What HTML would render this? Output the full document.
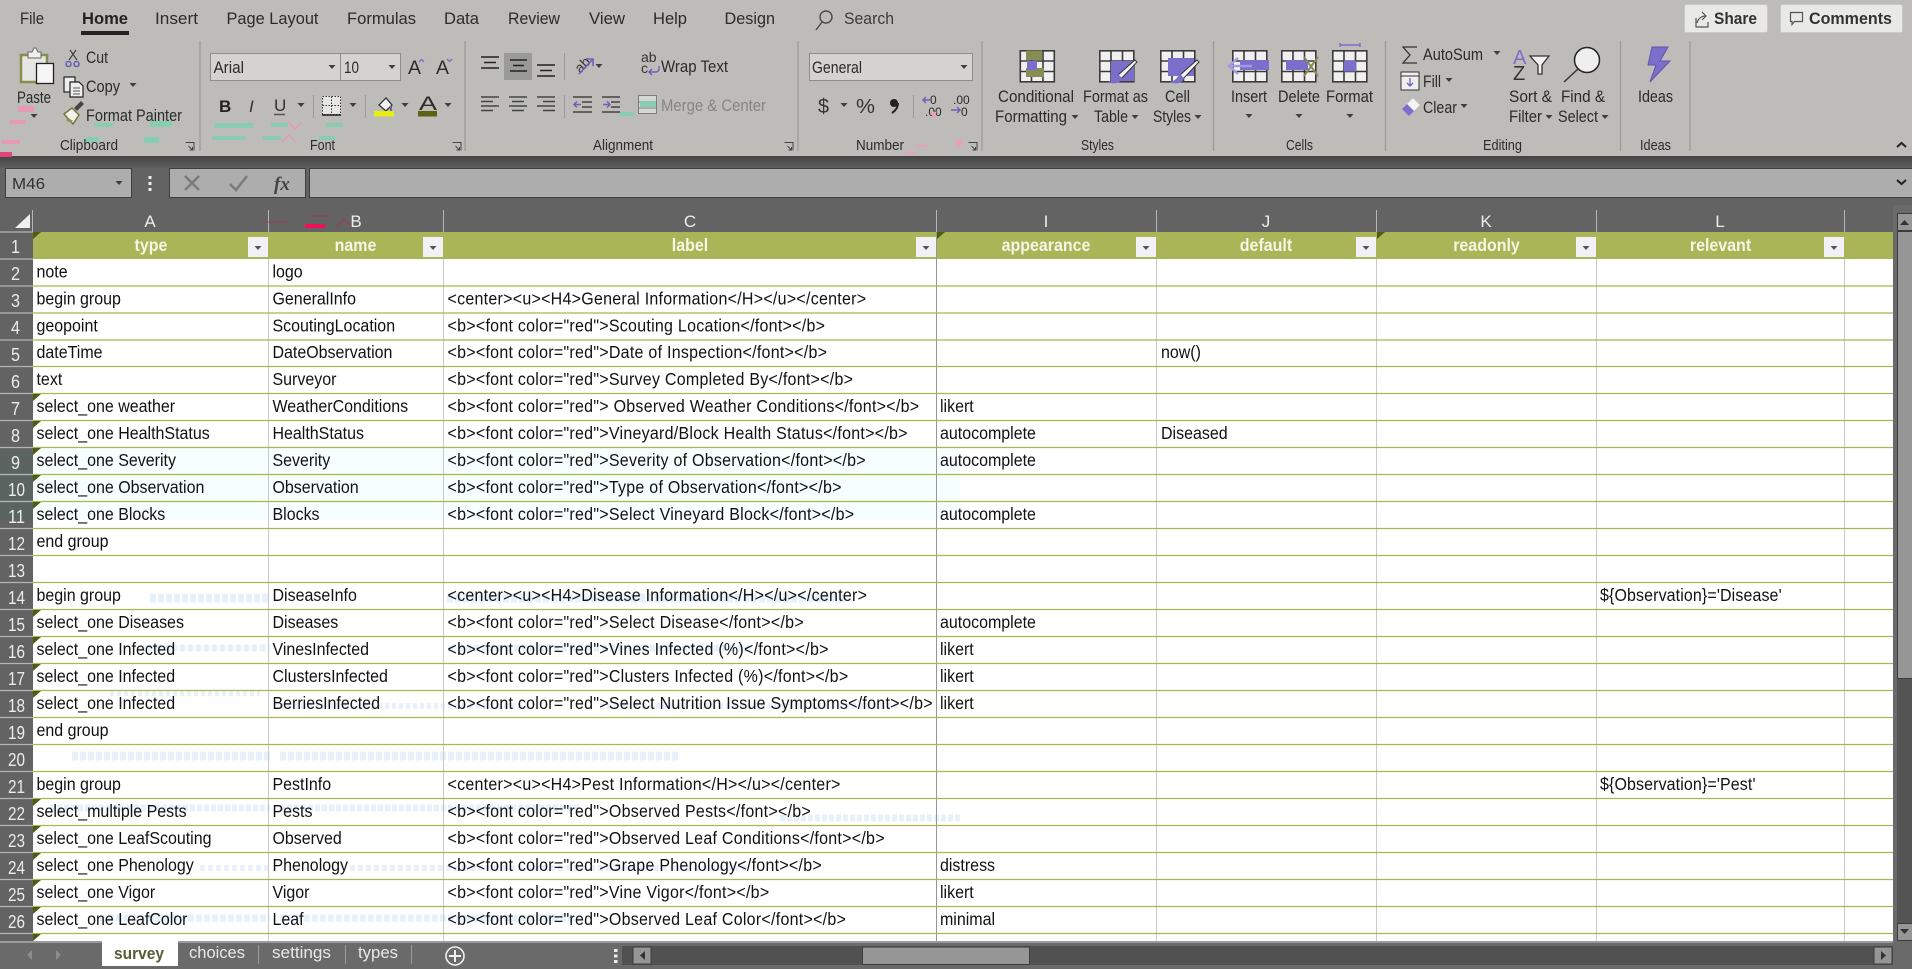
<!DOCTYPE html>
<html><head><meta charset="utf-8"><title>Excel</title>
<style>
html,body{margin:0;padding:0;width:1912px;height:969px;overflow:hidden;background:#636363}
svg{display:block;position:absolute;left:0;top:0}
text{font-family:"Liberation Sans",Arial,sans-serif;white-space:pre}
.r text{font-size:16.5px;fill:#2b2b2b}
.cl text{font-size:16px;fill:#111;transform-box:fill-box;transform-origin:0 81%;transform:translateY(-.8px) scaleY(1.07)}
.cl text[x="447.500"]{letter-spacing:.27px}
.cl text[x="1600"]{letter-spacing:.12px}
.hd text{font-size:16px;font-weight:bold;fill:#f4f6e6;text-anchor:middle;transform-box:fill-box;transform-origin:0 81%;transform:scaleY(1.07)}
.n text{font-size:18px;fill:#ececec}
.l text{font-size:17px;fill:#ececec;text-anchor:middle}
</style></head><body>
<svg width="1912" height="969" viewBox="0 0 1912 969" xmlns="http://www.w3.org/2000/svg">
<defs>
<path id="d" d="M-3.5-2h7l-3.5 4z" fill="#3e3e3e"/>
<g id="f"><rect width="20" height="20" fill="#f2f1f6"/><path d="M6.5 9h7l-3.5 4z" fill="#555"/></g>
<g id="tb" fill="none" stroke="#3a3a3a" stroke-width="1.6"><rect x=".8" y=".8" width="34" height="31" fill="#f0f0f0"/><path d="M.8 11h34M.8 21.5h34M12 .8v31M23.5 .8v31"/></g>
<path id="dl" d="M.5.5h8.500v8M3.500 4l4 4m0-3v3h-3" fill="none" stroke="#444" stroke-width="1"/>
</defs>

<!-- ribbon -->
<rect width="1912" height="157" fill="#bdbcb8"/>
<linearGradient id="gb" x1="0" y1="0" x2="0" y2="1"><stop offset="0" stop-color="#444"/><stop offset="1" stop-color="#5f5f5f"/></linearGradient>
<rect y="156" width="1912" height="12" fill="url(#gb)"/>
<rect y="168" width="1912" height="37" fill="#636363"/>

<g class="r">
<text x="20" y="24" textLength="24" lengthAdjust="spacingAndGlyphs">File</text>
<text x="82" y="24" textLength="46" lengthAdjust="spacingAndGlyphs" style="font-weight:bold;fill:#222">Home</text>
<text x="155" y="24" textLength="43" lengthAdjust="spacingAndGlyphs">Insert</text>
<text x="226.5" y="24" textLength="92" lengthAdjust="spacingAndGlyphs">Page Layout</text>
<text x="347" y="24" textLength="69" lengthAdjust="spacingAndGlyphs">Formulas</text>
<text x="444" y="24" textLength="35" lengthAdjust="spacingAndGlyphs">Data</text>
<text x="508" y="24" textLength="52" lengthAdjust="spacingAndGlyphs">Review</text>
<text x="589" y="24" textLength="36" lengthAdjust="spacingAndGlyphs">View</text>
<text x="653" y="24" textLength="34" lengthAdjust="spacingAndGlyphs">Help</text>
<text x="724.5" y="24" textLength="50.5" lengthAdjust="spacingAndGlyphs">Design</text>
<text x="844" y="24" textLength="50" lengthAdjust="spacingAndGlyphs" style="fill:#3c3c3c">Search</text>
<text x="60" y="150" textLength="58" lengthAdjust="spacingAndGlyphs" style="font-size:15px">Clipboard</text>
<text x="310" y="150" textLength="25" lengthAdjust="spacingAndGlyphs" style="font-size:15px">Font</text>
<text x="593" y="150" textLength="60" lengthAdjust="spacingAndGlyphs" style="font-size:15px">Alignment</text>
<text x="856" y="150" textLength="48" lengthAdjust="spacingAndGlyphs" style="font-size:15px">Number</text>
<text x="1081" y="150" textLength="33" lengthAdjust="spacingAndGlyphs" style="font-size:15px">Styles</text>
<text x="1286" y="150" textLength="27" lengthAdjust="spacingAndGlyphs" style="font-size:15px">Cells</text>
<text x="1483" y="150" textLength="39" lengthAdjust="spacingAndGlyphs" style="font-size:15px">Editing</text>
<text x="1640" y="150" textLength="31" lengthAdjust="spacingAndGlyphs" style="font-size:15px">Ideas</text>

<text x="17" y="103" textLength="34" lengthAdjust="spacingAndGlyphs">Paste</text>
<text x="86" y="63" textLength="22" lengthAdjust="spacingAndGlyphs">Cut</text>
<text x="86" y="92" textLength="34" lengthAdjust="spacingAndGlyphs">Copy</text>
<text x="86" y="121" textLength="96" lengthAdjust="spacingAndGlyphs">Format Painter</text>
<text x="661" y="72" textLength="67" lengthAdjust="spacingAndGlyphs">Wrap Text</text>
<text x="661" y="111" textLength="105" lengthAdjust="spacingAndGlyphs" style="fill:#858583">Merge &amp; Center</text>
<text x="998" y="102" textLength="76" lengthAdjust="spacingAndGlyphs">Conditional</text>
<text x="995" y="122" textLength="72" lengthAdjust="spacingAndGlyphs">Formatting</text>
<text x="1083" y="102" textLength="65" lengthAdjust="spacingAndGlyphs">Format as</text>
<text x="1094" y="122" textLength="34" lengthAdjust="spacingAndGlyphs">Table</text>
<text x="1165" y="102" textLength="25" lengthAdjust="spacingAndGlyphs">Cell</text>
<text x="1153" y="122" textLength="38" lengthAdjust="spacingAndGlyphs">Styles</text>
<text x="1231" y="102" textLength="36" lengthAdjust="spacingAndGlyphs">Insert</text>
<text x="1278" y="102" textLength="42" lengthAdjust="spacingAndGlyphs">Delete</text>
<text x="1326" y="102" textLength="47" lengthAdjust="spacingAndGlyphs">Format</text>
<text x="1423" y="60" textLength="60" lengthAdjust="spacingAndGlyphs">AutoSum</text>
<text x="1423" y="87" textLength="18" lengthAdjust="spacingAndGlyphs">Fill</text>
<text x="1423" y="113" textLength="34" lengthAdjust="spacingAndGlyphs">Clear</text>
<text x="1509" y="102" textLength="43" lengthAdjust="spacingAndGlyphs">Sort &amp;</text>
<text x="1509" y="122" textLength="33" lengthAdjust="spacingAndGlyphs">Filter</text>
<text x="1561" y="102" textLength="44" lengthAdjust="spacingAndGlyphs">Find &amp;</text>
<text x="1558" y="122" textLength="40" lengthAdjust="spacingAndGlyphs">Select</text>
<text x="1638" y="102" textLength="35" lengthAdjust="spacingAndGlyphs">Ideas</text>
</g>
<rect x="81" y="31" width="48" height="4" fill="#222"/>

<!-- search icon -->
<g fill="none" stroke="#4a4a4a" stroke-width="1.4"><circle cx="826" cy="17" r="6"/><path d="M822 22l-6 8"/></g>

<!-- share / comments -->
<rect x="1684.5" y="4.5" width="83" height="28" rx="2" fill="#e9e9e7" stroke="#c9c9c5"/>
<rect x="1780.5" y="4.5" width="122" height="28" rx="2" fill="#e9e9e7" stroke="#c9c9c5"/>
<g fill="none" stroke="#555" stroke-width="1.2"><path d="M1696 18v9h12v-5"/><path d="M1697 23c1-4 4-7 9-7M1702 12l4 4-4 4"/><path d="M1790.500 12.500h12v9h-8l-2.500 3v-3h-1.500z"/></g>
<g class="r"><text x="1714" y="24" textLength="43" lengthAdjust="spacingAndGlyphs" style="font-size:17px;font-weight:bold;fill:#333">Share</text>
<text x="1809" y="24" textLength="83" lengthAdjust="spacingAndGlyphs" style="font-size:17px;font-weight:bold;fill:#333">Comments</text></g>

<!-- group separators -->
<path d="M200 41v110M465 41v110M798 41v110M982 41v110M1213.5 41v110M1385.5 41v110M1620.5 41v110M1690 41v110" stroke="#9a9a97" stroke-width="1.2"/>
<use href="#dl" x="185" y="142"/><use href="#dl" x="452" y="142"/><use href="#dl" x="784" y="142"/><use href="#dl" x="968" y="142"/>

<!-- clipboard -->
<rect x="21" y="55" width="26" height="27" fill="#e6e6e2" stroke="#878d4c" stroke-width="2.5"/>
<path d="M28 58v-6h4l2-4h2l2 4h3v6z" fill="#efefec" stroke="#666" stroke-width="1"/>
<rect x="36.500" y="63.500" width="17" height="20" fill="#f6f6f6" stroke="#222" stroke-width="1.3"/>
<use href="#d" x="34" y="116"/>
<g fill="none" stroke="#3c3c3c" stroke-width="1.1"><path d="M69 60l7-10M77 60l-7-10"/></g>
<g fill="none" stroke="#6a62b8" stroke-width="1.6"><circle cx="68.500" cy="64" r="2.500"/><circle cx="76.500" cy="64" r="2.500"/></g>
<g stroke="#222" stroke-width="1.2" fill="#eee"><rect x="64" y="77" width="11" height="15"/><path d="M70 82h9l4 4v11H70z"/></g>
<path d="M73 88h7M73 91h7M73 94h7" stroke="#555"/>
<use href="#d" x="133" y="85"/>
<path d="M64 114l8-6 7 7-6 9z" fill="#f2f2ef" stroke="#75793f" stroke-width="1.5"/>
<path d="M74 108l7-7 3 3-7 7z" fill="#444"/>
<path d="M67 119l5 3" stroke="#8b914f" stroke-width="3"/>

<!-- font group -->
<rect x="210.500" y="53.500" width="130" height="27" fill="#d4d3d2" stroke="#8d8d8b"/>
<rect x="340.500" y="53.500" width="60" height="27" fill="#d4d3d2" stroke="#8d8d8b"/>
<g class="r"><text x="213.500" y="73" textLength="30.500" lengthAdjust="spacingAndGlyphs">Arial</text>
<text x="344" y="73" textLength="15" lengthAdjust="spacingAndGlyphs">10</text>
<text x="408" y="74" textLength="13" lengthAdjust="spacingAndGlyphs" style="font-size:19px">A</text>
<text x="436" y="74" textLength="13" lengthAdjust="spacingAndGlyphs" style="font-size:19px">A</text>
<text x="219" y="112" style="font-weight:bold;font-size:17px;fill:#222">B</text>
<text x="249" y="112" style="font-style:italic;font-size:17px;fill:#333">I</text>
<text x="274" y="111" style="font-size:17px;fill:#333">U</text>
<text x="419" y="110" textLength="18" lengthAdjust="spacingAndGlyphs" style="font-size:19px">A</text>
</g>
<use href="#d" x="332" y="67"/><use href="#d" x="392" y="67"/>
<path d="M419 62l2.500-2.500 2.500 2.500" fill="none" stroke="#7a70c8" stroke-width="1.4"/>
<path d="M447 59l2.500 2.500 2.500-2.500" fill="none" stroke="#7a70c8" stroke-width="1.4"/>
<path d="M274 114.500h11" stroke="#555" stroke-width="1.5"/>
<use href="#d" x="301" y="105"/>
<path d="M313.500 95v23M365.500 95v23" stroke="#9a9a97"/>
<rect x="322" y="96" width="19" height="19" fill="#e6e6e4"/>
<path d="M322.500 96.500h18v18h-18zM331.500 96.500v18M322.500 105.500h18" fill="none" stroke="#333" stroke-dasharray="1.500 1.500"/>
<path d="M322 115h19" stroke="#222" stroke-width="1.600"/>
<use href="#d" x="353" y="105"/>
<path d="M379 105l7-7 6 7-6 6z" fill="#f2f2f2" stroke="#333" stroke-width="1.300"/>
<path d="M391 106v5" stroke="#6a62b8" stroke-width="2"/>
<rect x="374" y="111" width="20" height="5.500" fill="#e6ee10"/>
<use href="#d" x="405" y="105"/>
<rect x="418" y="111" width="19" height="5.500" fill="#5b6310"/>
<use href="#d" x="448" y="105"/>

<!-- alignment -->
<rect x="504" y="53" width="28" height="27" fill="#9a9a98"/>
<path d="M481 57h18M484 62.500h12M481 68h18M510 60h17M513 65.500h11M510 71h17M537 65h18M540 70.500h12M537 76h18" stroke="#222" stroke-width="1.500"/>
<path d="M481 97h18M481 101.500h12M481 106h18M481 110.500h12M509 97h18M512 101.500h12M509 106h18M512 110.500h12M537 97h18M543 101.500h12M537 106h18M543 110.500h12" stroke="#444" stroke-width="1.500"/>
<path d="M564.500 53v27M564.500 95v23" stroke="#9a9a97"/>
<text x="573" y="70" transform="rotate(-45 581 63)" style="font-size:14px;fill:#333">ab</text>
<path d="M579 74l13-14M586 59h7v7" fill="none" stroke="#6a62b8" stroke-width="1.600"/>
<use href="#d" x="599" y="66"/>
<path d="M573 97h19M582 102h10M582 107h10M573 112h19M602 97h18M611 102h9M611 107h9M602 112h18" stroke="#444" stroke-width="1.500"/>
<path d="M581 104.500h-7m3-3l-3 3 3 3M603 104.500h7m-3-3l3 3-3 3" fill="none" stroke="#6a62b8" stroke-width="1.500"/>
<text x="641" y="62" style="font-size:14px;fill:#333">ab</text><text x="641" y="73" style="font-size:14px;fill:#333">c</text>
<path d="M659 66v3a3 3 0 0 1-3 3h-7m3-3l-3 3 3 3" fill="none" stroke="#6a62b8" stroke-width="1.400"/>
<g fill="none" stroke="#7d7d7b"><rect x="638.500" y="95.500" width="18" height="18" fill="#d6d6d2"/><path d="M638 102h18M638 108h18"/></g>

<!-- number -->
<rect x="809.500" y="53.500" width="163" height="27" fill="#d4d3d2" stroke="#8d8d8b"/>
<g class="r"><text x="812" y="73" textLength="50" lengthAdjust="spacingAndGlyphs">General</text>
<text x="818" y="113" textLength="11" lengthAdjust="spacingAndGlyphs" style="font-size:20px;fill:#333">$</text>
<text x="856" y="113" textLength="19" lengthAdjust="spacingAndGlyphs" style="font-size:20px;fill:#333">%</text>
<text x="930" y="104" style="font-size:12px">0</text><text x="925" y="116" style="font-size:12px">.00</text>
<text x="953" y="104" style="font-size:12px">.00</text><text x="961" y="116" style="font-size:12px">0</text></g>
<use href="#d" x="964" y="67"/><use href="#d" x="844" y="105"/>
<circle cx="894" cy="103" r="4" fill="#222"/><path d="M898 103c0 5-3 8-6 10" fill="none" stroke="#222" stroke-width="2"/>
<path d="M913.500 95v23" stroke="#9a9a97"/>
<path d="M932 100h-9m3-3l-3 3 3 3M951 110h9m-3-3l3 3-3 3" fill="none" stroke="#6a62b8" stroke-width="1.500"/>

<!-- styles icons -->
<use href="#tb" x="1019.500" y="50"/>
<rect x="1026" y="50.500" width="16" height="9.500" fill="#868c56"/><rect x="1026" y="68" width="18" height="9" fill="#868c56"/>
<rect x="1027" y="61" width="10" height="9" fill="#7a6fca"/>
<use href="#tb" x="1099" y="50"/>
<rect x="1111" y="61" width="23" height="20" fill="#7a6fca"/>
<path d="M1135 60l-17 15 3 4 16-17z" fill="#f4f4f4" stroke="#333"/>
<path d="M1118 74c-3 3-3 6-10 8 6 3 13 1 14-4z" fill="#7a6fca"/>
<use href="#tb" x="1160" y="50"/>
<rect x="1168" y="58" width="26" height="18" fill="#7a6fca"/>
<path d="M1197 60l-17 15 3 4 16-17z" fill="#f4f4f4" stroke="#333"/>
<path d="M1180 74c-3 3-3 6-10 8 6 3 13 1 14-4z" fill="#7a6fca"/>
<use href="#d" x="1075" y="117"/><use href="#d" x="1135" y="117"/><use href="#d" x="1198" y="117"/>

<!-- cells icons -->
<use href="#tb" x="1232" y="50"/>
<rect x="1240" y="60" width="29" height="10" fill="#7a6fca"/>
<path d="M1252 66h-21m7-8l-9 8 9 8" fill="none" stroke="#a29be0" stroke-width="2.500"/>
<use href="#tb" x="1281" y="50"/>
<rect x="1286" y="60" width="22" height="10" fill="#7a6fca"/>
<path d="M1304 57l14 19M1318 57l-14 19" stroke="#868c56" stroke-width="2"/>
<use href="#tb" x="1332" y="50"/>
<rect x="1344" y="60.500" width="12" height="11" fill="#7a6fca"/><path d="M1340 45h20M1340 43v4M1360 43v4" stroke="#7a6fca" stroke-width="1.400"/>
<use href="#d" x="1249" y="116"/><use href="#d" x="1299" y="116"/><use href="#d" x="1350" y="116"/>

<!-- editing icons -->
<path d="M1417 47h-14l7 8-7 8h14" fill="none" stroke="#333" stroke-width="1.300"/>
<use href="#d" x="1497" y="53"/>
<rect x="1401" y="72" width="18" height="18" fill="#efefef" stroke="#333"/><path d="M1401 76h18" stroke="#333"/>
<path d="M1410 78v8m-3-3l3 3 3-3" fill="none" stroke="#6a62b8" stroke-width="1.300"/>
<use href="#d" x="1449" y="80"/>
<path d="M1402 109l11-11 7 7-11 11z" fill="#7a6fca"/><path d="M1407 104l6-6 7 7-6 6z" fill="#f4f4f4"/>
<use href="#d" x="1464" y="106"/>
<text x="1513" y="64" style="font-size:20px;fill:#7a6fca">A</text><text x="1513" y="80" style="font-size:20px;fill:#333">Z</text>
<path d="M1530 56h19l-7 9v9h-4v-9z" fill="#efefef" stroke="#333" stroke-width="1.300"/>
<circle cx="1587" cy="60" r="12.500" fill="#efefef" stroke="#222" stroke-width="1.500"/><path d="M1578 69l-14 13" stroke="#333" stroke-width="1.500"/>
<use href="#d" x="1549" y="117"/><use href="#d" x="1605" y="117"/>
<path d="M1652 47h16l-8 14h10l-20 21 6-17h-8z" fill="#7a6fca" stroke="#5f55aa"/>
<path d="M1897 147l4.500-4 4.500 4" fill="none" stroke="#222" stroke-width="2"/>

<!-- noise -->
<g fill="#e79ab5"><rect x="18" y="106" width="16" height="6"/><rect x="10" y="120" width="16" height="4"/><rect x="2" y="140" width="18" height="4"/></g>
<rect y="152" width="12" height="5" fill="#e0447a"/>
<g fill="#88cdb0"><rect x="94" y="123" width="19" height="4"/><rect x="150" y="121" width="22" height="6"/><rect x="144" y="137" width="15" height="6"/><rect x="86" y="137" width="13" height="5"/><rect x="215" y="123" width="38" height="5"/><rect x="212" y="136" width="33" height="4"/><rect x="271" y="123" width="17" height="4"/><rect x="263" y="136" width="18" height="4"/><rect x="326" y="123" width="17" height="4"/><rect x="318" y="136" width="17" height="4"/><rect x="620" y="112" width="14" height="4"/><rect x="640" y="101" width="16" height="6"/></g>
<path d="M288 122l7 7 7-7M282 142l7-7 7 7" fill="none" stroke="#e79ab5" stroke-width="1.500"/>
<g fill="#e9a0b8"><rect x="932" y="112" width="4" height="6"/><rect x="916" y="145" width="12" height="2"/><rect x="956" y="140" width="6" height="6"/><rect x="905" y="152" width="12" height="2"/></g>

<!-- formula bar -->
<rect x="5.500" y="168.500" width="126" height="29" fill="#adadad" stroke="#3f3f3f"/>
<text x="12" y="189" textLength="33" lengthAdjust="spacingAndGlyphs" style="font-size:16px;fill:#333">M46</text>
<use href="#d" x="119" y="183"/>
<g fill="#eee"><rect x="148.500" y="176" width="3" height="3"/><rect x="148.500" y="182" width="3" height="3"/><rect x="148.500" y="188" width="3" height="3"/></g>
<rect x="169.500" y="168.500" width="136" height="29" fill="#adadad" stroke="#3f3f3f"/>
<path d="M185 176l14 14M199 176l-14 14" stroke="#7b7b7b" stroke-width="2.500"/>
<path d="M230 184l6 6 11-14" fill="none" stroke="#7b7b7b" stroke-width="2.500"/>
<text x="274" y="190" style="font-family:'Liberation Serif',serif;font-style:italic;font-weight:bold;font-size:19px;fill:#444">fx</text>
<rect x="309.500" y="168.500" width="1604" height="29" fill="#adadad" stroke="#3f3f3f"/>
<path d="M1897 180l4.500 4 4.500-4" fill="none" stroke="#222" stroke-width="2"/>

<!-- column letters -->
<path d="M30 214v14H15z" fill="#efefef"/>
<g class="l">
<text x="150" y="227">A</text><text x="356" y="227">B</text><text x="690" y="227">C</text><text x="1046" y="227">I</text><text x="1266" y="227">J</text><text x="1486" y="227">K</text><text x="1720" y="227">L</text>
</g>
<path d="M32.500 210v22M268.500 210v22M443.500 210v22M936.500 210v22M1156.500 210v22M1376.500 210v22M1596.500 210v22M1844.500 210v22" stroke="#b5b5b5"/>
<rect x="305" y="224" width="20" height="4" fill="#f0105a"/>
<path d="M265 222h22M310 216h22M337 226l7-7 7 7" fill="none" stroke="#9c3a58"/>
<path d="M335 233h14l-7 8z" fill="#c98e55"/>

<!-- grid -->
<rect x="0" y="232" width="33" height="709" fill="#636363"/>
<rect x="33" y="232" width="1861" height="27" fill="#a9b556"/>
<rect x="33" y="259" width="1861" height="682" fill="#fff"/>
<rect x="33" y="445" width="927" height="75" fill="#f6fefe"/>
<rect x="0" y="450" width="33" height="70" fill="#55665f" opacity=".5"/>

<!-- ghost -->
<g fill="none" stroke="#e6f1fb" stroke-width="9">
<path d="M150 598h120M447 598h400" stroke-dasharray="6 2"/>
<path d="M140 648h130M450 648h300" stroke-dasharray="5 3" stroke-width="7"/>
<path d="M110 693h150M280 706h250M600 706h300" stroke-dasharray="4 3" stroke-width="6"/>
<path d="M72 756h200M280 756h400" stroke-dasharray="6 2"/>
<path d="M50 808h220M280 808h300M780 818h180" stroke-dasharray="5 2" stroke-width="7"/>
<path d="M200 868h70M350 868h400" stroke-dasharray="5 3" stroke-width="6"/>
<path d="M100 918h170M280 918h300" stroke-dasharray="6 2" stroke-width="7"/>
</g>

<!-- lines -->
<path d="M268.500 259v682M443.500 259v682M1156.500 259v682M1376.500 259v682M1596.500 259v682M1844.500 259v682" stroke="#c9c9c9" stroke-width="1"/>
<path d="M936.500 232v709" stroke="#969696" stroke-width="1"/>
<path d="M33 286h1861M33 313h1861M33 340h1861M33 366.500h1861M33 393.500h1861M33 420.500h1861M33 447.500h1861M33 474.500h1861M33 501.500h1861M33 528.500h1861M33 555.500h1861M33 582.500h1861M33 609.500h1861M33 636.500h1861M33 663.500h1861M33 690.500h1861M33 717.500h1861M33 744.500h1861M33 771.500h1861M33 798.500h1861M33 825.500h1861M33 852.500h1861M33 879.500h1861M33 906.500h1861M33 933.500h1861" stroke="#a9b752" stroke-width="1.300"/>
<path d="M0 232h33M0 259h33M0 286h33M0 313h33M0 340h33M0 366.500h33M0 393.500h33M0 420.500h33M0 447.500h33M0 474.500h33M0 501.500h33M0 528.500h33M0 555.500h33M0 582.500h33M0 609.500h33M0 636.500h33M0 663.500h33M0 690.500h33M0 717.500h33M0 744.500h33M0 771.500h33M0 798.500h33M0 825.500h33M0 852.500h33M0 879.500h33M0 906.500h33M0 933.500h33" stroke="#b4b4b4" stroke-width="1.300"/>

<!-- triangles -->
<path d="M33 232h8l-8 7zM33 394h8l-8 7zM33 421h8l-8 7zM33 448h8l-8 7zM33 475h8l-8 7zM33 502h8l-8 7zM33 610h8l-8 7zM33 637h8l-8 7zM33 664h8l-8 7zM33 691h8l-8 7zM33 799h8l-8 7zM33 826h8l-8 7zM33 853h8l-8 7zM33 880h8l-8 7zM33 907h8l-8 7zM33 934h8l-8 7zM937 232h8l-8 7zM1377 232h8l-8 7z" fill="#4e5c14"/>

<!-- row numbers -->
<g class="n">
<text x="11" y="253" textLength="9" lengthAdjust="spacingAndGlyphs">1</text>
<text x="11" y="280" textLength="9" lengthAdjust="spacingAndGlyphs">2</text>
<text x="11" y="307" textLength="9" lengthAdjust="spacingAndGlyphs">3</text>
<text x="11" y="334" textLength="9" lengthAdjust="spacingAndGlyphs">4</text>
<text x="11" y="361" textLength="9" lengthAdjust="spacingAndGlyphs">5</text>
<text x="11" y="388" textLength="9" lengthAdjust="spacingAndGlyphs">6</text>
<text x="11" y="415" textLength="9" lengthAdjust="spacingAndGlyphs">7</text>
<text x="11" y="442" textLength="9" lengthAdjust="spacingAndGlyphs">8</text>
<text x="11" y="469" textLength="9" lengthAdjust="spacingAndGlyphs">9</text>
<text x="8" y="496" textLength="17" lengthAdjust="spacingAndGlyphs">10</text>
<text x="8" y="523" textLength="17" lengthAdjust="spacingAndGlyphs">11</text>
<text x="8" y="550" textLength="17" lengthAdjust="spacingAndGlyphs">12</text>
<text x="8" y="577" textLength="17" lengthAdjust="spacingAndGlyphs">13</text>
<text x="8" y="604" textLength="17" lengthAdjust="spacingAndGlyphs">14</text>
<text x="8" y="631" textLength="17" lengthAdjust="spacingAndGlyphs">15</text>
<text x="8" y="658" textLength="17" lengthAdjust="spacingAndGlyphs">16</text>
<text x="8" y="685" textLength="17" lengthAdjust="spacingAndGlyphs">17</text>
<text x="8" y="712" textLength="17" lengthAdjust="spacingAndGlyphs">18</text>
<text x="8" y="739" textLength="17" lengthAdjust="spacingAndGlyphs">19</text>
<text x="8" y="766" textLength="17" lengthAdjust="spacingAndGlyphs">20</text>
<text x="8" y="793" textLength="17" lengthAdjust="spacingAndGlyphs">21</text>
<text x="8" y="820" textLength="17" lengthAdjust="spacingAndGlyphs">22</text>
<text x="8" y="847" textLength="17" lengthAdjust="spacingAndGlyphs">23</text>
<text x="8" y="874" textLength="17" lengthAdjust="spacingAndGlyphs">24</text>
<text x="8" y="901" textLength="17" lengthAdjust="spacingAndGlyphs">25</text>
<text x="8" y="928" textLength="17" lengthAdjust="spacingAndGlyphs">26</text>
</g>

<!-- header row -->
<g class="hd">
<text x="151" y="251">type</text><text x="355.500" y="251">name</text><text x="690" y="251">label</text><text x="1046" y="251">appearance</text><text x="1266" y="251">default</text><text x="1486.500" y="251">readonly</text><text x="1720.500" y="251">relevant</text>
</g>
<use href="#f" x="248" y="237"/><use href="#f" x="423" y="237"/><use href="#f" x="916" y="237"/><use href="#f" x="1136" y="237"/><use href="#f" x="1356" y="237"/><use href="#f" x="1576" y="237"/><use href="#f" x="1824" y="237"/>

<!-- cells -->
<g class="cl">
<text x="36.500" y="278.500">note</text><text x="272.500" y="278.500">logo</text>
<text x="36.500" y="305.500">begin group</text><text x="272.500" y="305.500">GeneralInfo</text><text x="447.500" y="305.500">&lt;center&gt;&lt;u&gt;&lt;H4&gt;General Information&lt;/H&gt;&lt;/u&gt;&lt;/center&gt;</text>
<text x="36.500" y="332.500">geopoint</text><text x="272.500" y="332.500">ScoutingLocation</text><text x="447.500" y="332.500">&lt;b&gt;&lt;font color="red"&gt;Scouting Location&lt;/font&gt;&lt;/b&gt;</text>
<text x="36.500" y="359">dateTime</text><text x="272.500" y="359">DateObservation</text><text x="447.500" y="359">&lt;b&gt;&lt;font color="red"&gt;Date of Inspection&lt;/font&gt;&lt;/b&gt;</text><text x="1161" y="359">now()</text>
<text x="36.500" y="386">text</text><text x="272.500" y="386">Surveyor</text><text x="447.500" y="386">&lt;b&gt;&lt;font color="red"&gt;Survey Completed By&lt;/font&gt;&lt;/b&gt;</text>
<text x="36.500" y="413">select_one weather</text><text x="272.500" y="413">WeatherConditions</text><text x="447.500" y="413">&lt;b&gt;&lt;font color="red"&gt; Observed Weather Conditions&lt;/font&gt;&lt;/b&gt;</text><text x="940" y="413">likert</text>
<text x="36.500" y="440">select_one HealthStatus</text><text x="272.500" y="440">HealthStatus</text><text x="447.500" y="440">&lt;b&gt;&lt;font color="red"&gt;Vineyard/Block Health Status&lt;/font&gt;&lt;/b&gt;</text><text x="940" y="440">autocomplete</text><text x="1161" y="440">Diseased</text>
<text x="36.500" y="467">select_one Severity</text><text x="272.500" y="467">Severity</text><text x="447.500" y="467">&lt;b&gt;&lt;font color="red"&gt;Severity of Observation&lt;/font&gt;&lt;/b&gt;</text><text x="940" y="467">autocomplete</text>
<text x="36.500" y="494">select_one Observation</text><text x="272.500" y="494">Observation</text><text x="447.500" y="494">&lt;b&gt;&lt;font color="red"&gt;Type of Observation&lt;/font&gt;&lt;/b&gt;</text>
<text x="36.500" y="521">select_one Blocks</text><text x="272.500" y="521">Blocks</text><text x="447.500" y="521">&lt;b&gt;&lt;font color="red"&gt;Select Vineyard Block&lt;/font&gt;&lt;/b&gt;</text><text x="940" y="521">autocomplete</text>
<text x="36.500" y="548">end group</text>
<text x="36.500" y="602">begin group</text><text x="272.500" y="602">DiseaseInfo</text><text x="447.500" y="602">&lt;center&gt;&lt;u&gt;&lt;H4&gt;Disease Information&lt;/H&gt;&lt;/u&gt;&lt;/center&gt;</text><text x="1600" y="602">${Observation}='Disease'</text>
<text x="36.500" y="629">select_one Diseases</text><text x="272.500" y="629">Diseases</text><text x="447.500" y="629">&lt;b&gt;&lt;font color="red"&gt;Select Disease&lt;/font&gt;&lt;/b&gt;</text><text x="940" y="629">autocomplete</text>
<text x="36.500" y="656">select_one Infected</text><text x="272.500" y="656">VinesInfected</text><text x="447.500" y="656">&lt;b&gt;&lt;font color="red"&gt;Vines Infected (%)&lt;/font&gt;&lt;/b&gt;</text><text x="940" y="656">likert</text>
<text x="36.500" y="683">select_one Infected</text><text x="272.500" y="683">ClustersInfected</text><text x="447.500" y="683">&lt;b&gt;&lt;font color="red"&gt;Clusters Infected (%)&lt;/font&gt;&lt;/b&gt;</text><text x="940" y="683">likert</text>
<text x="36.500" y="710">select_one Infected</text><text x="272.500" y="710">BerriesInfected</text><text x="447.500" y="710">&lt;b&gt;&lt;font color="red"&gt;Select Nutrition Issue Symptoms&lt;/font&gt;&lt;/b&gt;</text><text x="940" y="710">likert</text>
<text x="36.500" y="737">end group</text>
<text x="36.500" y="791">begin group</text><text x="272.500" y="791">PestInfo</text><text x="447.500" y="791">&lt;center&gt;&lt;u&gt;&lt;H4&gt;Pest Information&lt;/H&gt;&lt;/u&gt;&lt;/center&gt;</text><text x="1600" y="791">${Observation}='Pest'</text>
<text x="36.500" y="818">select_multiple Pests</text><text x="272.500" y="818">Pests</text><text x="447.500" y="818">&lt;b&gt;&lt;font color="red"&gt;Observed Pests&lt;/font&gt;&lt;/b&gt;</text>
<text x="36.500" y="845">select_one LeafScouting</text><text x="272.500" y="845">Observed</text><text x="447.500" y="845">&lt;b&gt;&lt;font color="red"&gt;Observed Leaf Conditions&lt;/font&gt;&lt;/b&gt;</text>
<text x="36.500" y="872">select_one Phenology</text><text x="272.500" y="872">Phenology</text><text x="447.500" y="872">&lt;b&gt;&lt;font color="red"&gt;Grape Phenology&lt;/font&gt;&lt;/b&gt;</text><text x="940" y="872">distress</text>
<text x="36.500" y="899">select_one Vigor</text><text x="272.500" y="899">Vigor</text><text x="447.500" y="899">&lt;b&gt;&lt;font color="red"&gt;Vine Vigor&lt;/font&gt;&lt;/b&gt;</text><text x="940" y="899">likert</text>
<text x="36.500" y="926">select_one LeafColor</text><text x="272.500" y="926">Leaf</text><text x="447.500" y="926">&lt;b&gt;&lt;font color="red"&gt;Observed Leaf Color&lt;/font&gt;&lt;/b&gt;</text><text x="940" y="926">minimal</text>
</g>

<!-- right scrollbar -->
<rect x="1893" y="205" width="19" height="764" fill="#6a6a6a"/>
<rect x="1897" y="213" width="15" height="727" fill="#545454"/>
<rect x="1897.500" y="213.500" width="15" height="17" fill="#969696" stroke="#3c3c3c"/>
<path d="M1900 225l4.500-5 4.500 5z" fill="#333"/>
<rect x="1897.500" y="231.500" width="15" height="447" fill="#969696" stroke="#3c3c3c"/>
<rect x="1897.500" y="923.500" width="15" height="17" fill="#969696" stroke="#3c3c3c"/>
<path d="M1900 929l4.500 5 4.500-5z" fill="#333"/>

<!-- bottom bar -->
<rect y="941" width="1912" height="28" fill="#6a6a6a"/>
<rect y="941" width="1893" height="2" fill="#9a9a9a"/>
<rect x="622" y="946" width="1271" height="19" fill="#515151"/>
<path d="M32 950l-5 5 5 5zM56 950l5 5-5 5z" fill="#8c8c8c"/>
<rect x="102" y="941" width="76" height="25" fill="#fff"/>
<text x="114" y="959" textLength="50" lengthAdjust="spacingAndGlyphs" style="font-size:17px;font-weight:bold;fill:#555d33">survey</text>
<text x="189" y="958" textLength="56" lengthAdjust="spacingAndGlyphs" style="font-size:17px;fill:#e8e8e8">choices</text>
<text x="272" y="958" textLength="59" lengthAdjust="spacingAndGlyphs" style="font-size:17px;fill:#e8e8e8">settings</text>
<text x="358" y="958" textLength="40" lengthAdjust="spacingAndGlyphs" style="font-size:17px;fill:#e8e8e8">types</text>
<path d="M258.500 945v19M345.500 945v19M411.500 945v19" stroke="#9a9a9a"/>
<circle cx="455" cy="956" r="9" fill="none" stroke="#efefef" stroke-width="1.600"/><path d="M449 956h12M455 950v12" stroke="#efefef" stroke-width="2"/>
<g fill="#eee"><rect x="614" y="949" width="3.500" height="3"/><rect x="614" y="954.500" width="3.500" height="3"/><rect x="614" y="960" width="3.500" height="3"/></g>
<rect x="633" y="947" width="18" height="17" fill="#969696" stroke="#3c3c3c"/>
<path d="M645 951l-5 4.500 5 4.500z" fill="#333"/>
<rect x="862.500" y="947" width="167" height="17.500" fill="#969696" stroke="#3c3c3c"/>
<rect x="1874" y="947" width="18" height="17" fill="#969696" stroke="#3c3c3c"/>
<path d="M1881 951l5 4.500-5 4.500z" fill="#333"/>
</svg>
</body></html>
